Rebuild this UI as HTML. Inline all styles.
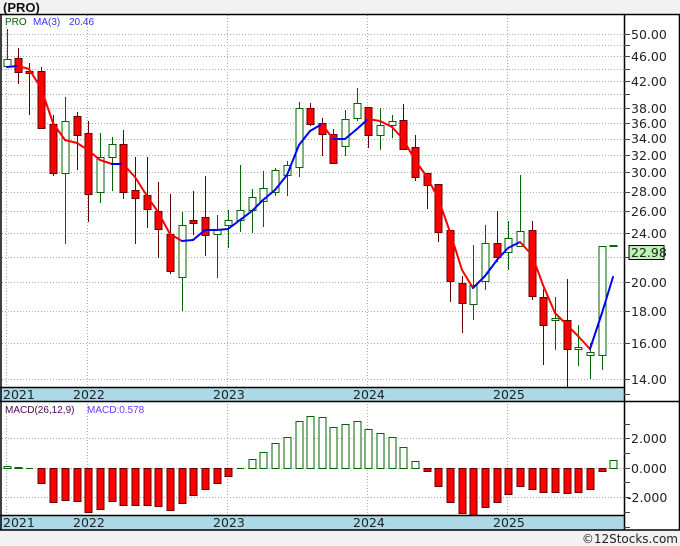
<!DOCTYPE html>
<html><head><meta charset="utf-8"><style>
html,body{margin:0;padding:0;background:#f2f2f2;width:680px;height:546px;overflow:hidden}
svg{display:block;font-family:"DejaVu Sans","Liberation Sans",sans-serif}
</style></head><body>
<svg id="s" width="680" height="546" xmlns="http://www.w3.org/2000/svg">
<rect x="0" y="0" width="680" height="546" fill="#f2f2f2"/>
<rect x="0" y="14" width="680" height="516" fill="#fff"/>
<text x="3" y="12" font-size="13" font-weight="bold" fill="#111" font-family="Liberation Sans,sans-serif">(PRO)</text>
<g id="grid" stroke="#aaa" stroke-dasharray="1,2" stroke-width="1"></g>
<rect x="0" y="387" width="624" height="14" fill="#add8e6"/>
<rect x="0" y="515" width="624" height="15" fill="#add8e6"/>
<g id="candles"></g>
<g id="ma" fill="none" stroke-width="2"></g>
<g id="macd"></g>
<g stroke="#000" stroke-width="1.5" fill="none">
<line x1="0" y1="14.5" x2="680" y2="14.5"/>
<line x1="1" y1="14" x2="1" y2="530"/>
<line x1="624.5" y1="14" x2="624.5" y2="530"/>
<line x1="679.5" y1="14" x2="679.5" y2="530"/>
<line x1="0" y1="387.5" x2="624" y2="387.5"/>
<line x1="0" y1="401.5" x2="680" y2="401.5"/>
<line x1="0" y1="515.5" x2="624" y2="515.5"/>
<line x1="0" y1="530" x2="680" y2="530"/>
</g>
<g id="ticks" stroke="#444" stroke-width="1"></g>
<g font-size="12.5" fill="#222">
<text x="631" y="39">50.00</text><text x="631" y="61">46.00</text><text x="631" y="86">42.00</text>
<text x="631" y="113">38.00</text><text x="631" y="128">36.00</text><text x="631" y="143">34.00</text>
<text x="631" y="160">32.00</text><text x="631" y="177">30.00</text><text x="631" y="196">28.00</text>
<text x="631" y="216">26.00</text><text x="631" y="238">24.00</text><text x="631" y="287">20.00</text>
<text x="631" y="316">18.00</text><text x="631" y="348">16.00</text><text x="631" y="384">14.00</text>
<text x="631" y="443">2.000</text><text x="631" y="473">0.000</text><text x="627" y="502">-2.000</text>
<text x="3" y="399">2021</text><text x="73" y="399">2022</text><text x="213" y="399">2023</text><text x="353" y="399">2024</text><text x="493" y="399">2025</text>
<text x="3" y="527">2021</text><text x="73" y="527">2022</text><text x="213" y="527">2023</text><text x="353" y="527">2024</text><text x="493" y="527">2025</text>
</g>
<rect x="629" y="245.5" width="35" height="14" fill="#b8f5b0" stroke="#000"/>
<text x="631" y="257" font-size="12.5" fill="#222">22.98</text>
<g font-size="10" font-family="Liberation Sans,sans-serif">
<text x="5" y="25" fill="#006400">PRO</text><text x="33" y="25" fill="#3333ff">MA(3)</text><text x="69" y="25" fill="#3333ff">20.46</text>
<text x="5" y="413" fill="#4b0060">MACD(26,12,9)</text><text x="87" y="413" fill="#6a3cff">MACD:0.578</text>
</g>
<text x="678" y="543" font-size="12" fill="#222" text-anchor="end">©12Stocks.com</text>
</svg>
<script>
var NS="http://www.w3.org/2000/svg";
function el(p,t,a){var e=document.createElementNS(NS,t);for(var k in a)e.setAttribute(k,a[k]);p.appendChild(e);return e;}
var g=document.getElementById('grid');
[34,45,56,69,81,94,108,123,139,155,172,192,211,233,257,282,311,343,379].forEach(function(y){el(g,'line',{x1:2,y1:y+.5,x2:624,y2:y+.5});});
[438,468,497].forEach(function(y){el(g,'line',{x1:2,y1:y+.5,x2:624,y2:y+.5});});
[6,87,227,367,507].forEach(function(x){el(g,'line',{x1:x+.5,y1:15,x2:x+.5,y2:387});el(g,'line',{x1:x+.5,y1:401,x2:x+.5,y2:515});});
var tk=document.getElementById('ticks');
[34,45,56,69,81,94,108,123,139,155,172,192,211,233,257,282,311,343,379,394,424,438,453,468,482,497,512,527].forEach(function(y){el(tk,'line',{x1:624,y1:y+.5,x2:630,y2:y+.5});});
var C=[[7,'g',59,66,29,66],[18,'r',58,72,48,84],[29,'r',71,73,63,115],[41,'r',71,128,67,129],[53,'r',124,173,115,176],[65,'g',121,173,97,244],[77,'r',116,135,112,170],[88,'r',133,194,121,222],[100,'g',157,192,133,203],[112,'g',144,157,137,191],[123,'r',144,192,130,199],[135,'r',190,198,157,244],[147,'r',195,209,157,228],[158,'r',211,229,182,258],[170,'r',234,271,194,274],[182,'g',225,277,212,311],[193,'r',220,223,191,235],[205,'r',217,235,176,256],[217,'g',229,234,215,278],[228,'g',220,225,210,248],[240,'g',210,220,165,232],[252,'g',197,210,189,233],[263,'g',188,201,171,227],[275,'g',170,192,168,196],[287,'g',165,175,161,196],[299,'g',108,167,102,177],[310,'r',108,124,103,126],[322,'r',123,134,118,156],[333,'r',134,163,129,164],[345,'g',119,146,110,156],[357,'g',103,118,88,121],[368,'r',107,135,107,148],[380,'g',125,135,108,150],[392,'g',121,125,115,138],[403,'r',120,149,104,149],[415,'r',147,177,135,181],[427,'r',173,185,173,209],[438,'r',184,232,184,242],[450,'r',230,281,230,302],[462,'r',283,303,276,333],[473,'g',285,304,245,320],[485,'g',243,281,225,290],[497,'r',243,257,211,262],[508,'g',238,252,221,270],[520,'g',231,246,175,247],[532,'r',230,296,221,300],[543,'r',297,325,289,365],[555,'g',318,320,297,350],[567,'r',320,349,279,388],[578,'g',347,349,325,366],[590,'g',352,355,343,379],[602,'g',246,355,246,370],[613,'g',245,246,245,246]];
var cg=document.getElementById('candles');
C.forEach(function(c){var x=c[0],red=c[1]=='r';
el(cg,'line',{x1:x+.5,y1:c[4],x2:x+.5,y2:c[5],stroke:red?'#660000':'#006400','stroke-width':1});
var h=Math.max(c[3]-c[2],1);
el(cg,'rect',{x:x-3,y:c[2]+.5,width:7,height:h,fill:red?'#ff0000':'#fff',stroke:red?'#660000':'#006400','stroke-width':1});});
var M=[[7,67],[18,66],[29,69],[41,88],[53,123],[65,140],[77,143],[88,150],[100,160],[112,164],[123,164],[135,177],[147,196],[158,212],[170,234],[182,241],[193,240],[205,230],[217,230],[228,229],[240,220],[252,211],[263,200],[275,190],[287,175],[299,145],[310,131],[322,124],[333,139],[345,139],[357,129],[368,119],[380,121],[392,127],[403,139],[415,160],[427,177],[438,198],[450,232],[462,270],[473,288],[485,276],[497,260],[508,248],[520,242],[532,255],[543,285],[555,313],[567,325],[578,336],[590,349],[602,313],[613,277]];
var mg=document.getElementById('ma');
for(var i=1;i<M.length;i++){var a=M[i-1],b=M[i];el(mg,'line',{x1:a[0],y1:a[1],x2:b[0],y2:b[1],stroke:b[1]>=a[1]+0.5?'#ff0000':'#0000ff','stroke-linecap':'round'});}
var D=[466,467,468,483,502,500,501,512,509,501,505,505,505,506,510,503,495,489,483,476,468,459,452,443,437,421,416,417,427,424,421,429,433,437,447,461,471,486,502,513,515,507,502,494,486,489,492,492,493,492,489,471,460];
var dg=document.getElementById('macd');
D.forEach(function(v,i){var x=C[i][0];
if(v==468){el(dg,'line',{x1:x-3,y1:468.5,x2:x+4,y2:468.5,stroke:'#006400'});return;}
if(v<468)el(dg,'rect',{x:x-3,y:v+.5,width:7,height:468-v,fill:'#fff',stroke:'#006400'});
else el(dg,'rect',{x:x-3,y:468.5,width:7,height:v-468,fill:'#ff0000',stroke:'#660000'});});
</script>
</body></html>
